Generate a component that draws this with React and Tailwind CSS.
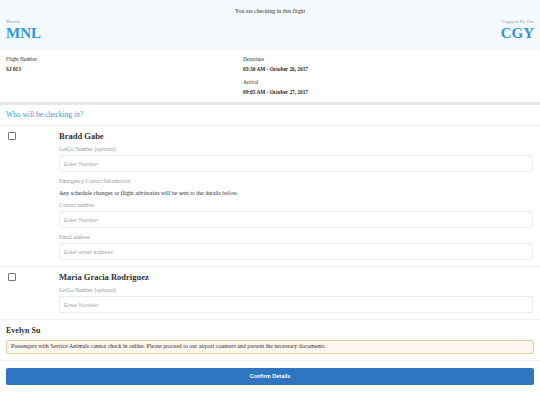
import React from 'react';

const serif = { fontFamily: '"Liberation Serif", "Times New Roman", serif' };
const sans = { fontFamily: '"Liberation Sans", Arial, sans-serif' };

function Field({ label, placeholder }) {
  return (
    <div className="leading-none">
      <div className="text-[5.5px] leading-[6px] text-[#999] mb-[3px]">{label}</div>
      <input
        placeholder={placeholder}
        className="block w-full h-[17px] border border-[#ececec] rounded-[2px] px-[4px] text-[5.5px] placeholder:text-[#aaa] bg-white outline-none"
        style={sans}
      />
    </div>
  );
}

function Passenger({ name, children }) {
  return (
    <div className="flex border-b border-[#f1f1f1] pt-[5px] pb-[6px] pr-[7px] leading-none">
      <div className="w-[59px] pl-[8px] pt-[1px]">
        <div className="w-[8px] h-[8px] border border-[#777] rounded-[1px] bg-white" />
      </div>
      <div className="flex-1">
        <div className="text-[8.5px] leading-[10px] font-bold text-[#333] mb-[5px]">{name}</div>
        {children}
      </div>
    </div>
  );
}

export default function App() {
  return (
    <div className="w-[540px] h-[405px] bg-white text-[#222] overflow-hidden" style={serif}>
      <div className="bg-[#f4faff] h-[50px] px-[6px] pt-[7px]">
        <div className="text-center text-[5.8px] leading-[8px] text-[#333]">You are checking in this flight</div>
        <div className="flex justify-between items-end mt-[4px]">
          <div>
            <div className="text-[4.8px] leading-[6px] text-[#999]">Manila</div>
            <div className="text-[15px] leading-[16px] font-bold text-[#2f96d8]">MNL</div>
          </div>
          <div className="text-right">
            <div className="text-[4.8px] leading-[6px] text-[#999]">Cagayan De Oro</div>
            <div className="text-[15px] leading-[16px] font-bold text-[#2f96d8]">CGY</div>
          </div>
        </div>
      </div>

      <div className="grid grid-cols-[237px_1fr] px-[6px] pt-[6px] pb-[7px] text-[5.3px] leading-[6px]">
        <div>
          <div className="text-[#333]">Flight Number</div>
          <div className="font-bold mt-[4px]">SJ 813</div>
        </div>
        <div>
          <div className="text-[#333]">Departure</div>
          <div className="font-bold mt-[4px]">05:30 AM - October 26, 2017</div>
          <div className="text-[#333] mt-[7px]">Arrival</div>
          <div className="font-bold mt-[4px]">09:05 AM - October 27, 2017</div>
        </div>
      </div>

      <div className="h-[3px] bg-[#e8e8e8]" />

      <div className="px-[6px] h-[21px] flex items-center border-b border-[#f1f1f1] text-[7.5px] text-[#3a9ad9]">
        Who will be checking in?
      </div>

      <Passenger name="Bradd Gabe">
        <Field label="GetGo Number (optional)" placeholder="Enter Number" />
        <div className="mt-[6px] mb-[5px]">
          <div className="text-[5.5px] leading-[6px] text-[#999]">Emergency Contact Information</div>
          <div className="text-[6px] leading-[7px] text-[#333] mt-[6px]">
            Any schedule changes or flight advisories will be sent to the details below.
          </div>
        </div>
        <Field label="Contact number" placeholder="Enter Number" />
        <div className="mt-[6px]">
          <Field label="Email address" placeholder="Enter email address" />
        </div>
      </Passenger>

      <Passenger name="Maria Gracia Rodriguez">
        <Field label="GetGo Number (optional)" placeholder="Enter Number" />
      </Passenger>

      <div className="px-[6px] pt-[6px] pb-[6px] border-b border-[#f1f1f1] leading-none">
        <div className="text-[8px] leading-[10px] font-bold text-[#333] mb-[4px]">Evelyn Su</div>
        <div className="border border-[#e3cc9f] bg-[#fdf7ee] rounded-[2px] px-[4px] h-[14px] flex items-center text-[5.9px] text-[#333]">
          Passengers with Service Animals cannot check in online. Please proceed to our airport counters and present the necessary documents.
        </div>
      </div>

      <div className="px-[6px] pt-[7px]">
        <button
          className="block w-full h-[17px] rounded-[2px] bg-[#2f76c2] text-white text-[5.5px] font-bold"
          style={sans}
        >
          Confirm Details
        </button>
      </div>
    </div>
  );
}
